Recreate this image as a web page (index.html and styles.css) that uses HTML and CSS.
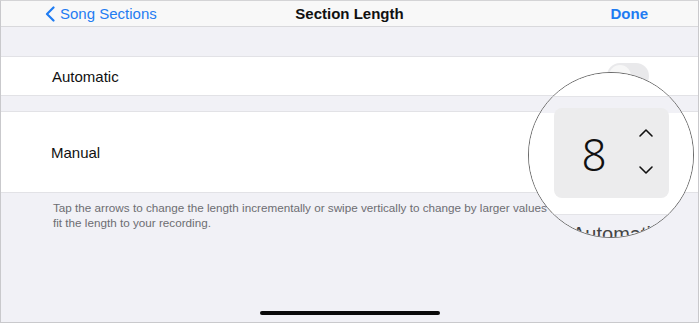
FILE: index.html
```html
<!DOCTYPE html>
<html>
<head>
<meta charset="utf-8">
<link rel="stylesheet" href="styles.css">
</head>
<body>
<div class="frame">
  <header class="nav">
    <div class="nav-back">
      <svg class="chev" width="10" height="16" viewBox="0 0 10 16"><path d="M8.5 1.5 L2 8 L8.5 14.5" fill="none" stroke="#1f7cf2" stroke-width="2.2" stroke-linecap="round" stroke-linejoin="round"/></svg>
      <span>Song Sections</span>
    </div>
    <div class="nav-title">Section Length</div>
    <div class="nav-done">Done</div>
  </header>
  <div class="band band-top"></div>
  <div class="row row-auto">
    <span class="label">Automatic</span>
    <span class="toggle"><span class="knob"></span></span>
  </div>
  <div class="band band-mid"></div>
  <div class="row row-manual">
    <span class="label">Manual</span>
  </div>
  <div class="footer">
    <p class="note">Tap the arrows to change the length incrementally or swipe vertically to change by larger values to<br>fit the length to your recording.</p>
    <div class="home"></div>
  </div>

  <div class="magnifier">
    <div class="m-white-top"></div>
    <div class="m-band"></div>
    <div class="m-white">
      <div class="stepper">
        <span class="num">8</span>
        <span class="arrows">
          <svg width="16" height="10" viewBox="0 0 16 10"><path d="M2 8 L8 2 L14 8" fill="none" stroke="#111" stroke-width="1.6" stroke-linecap="round" stroke-linejoin="round"/></svg>
          <svg width="16" height="10" viewBox="0 0 16 10"><path d="M2 2 L8 8 L14 2" fill="none" stroke="#111" stroke-width="1.6" stroke-linecap="round" stroke-linejoin="round"/></svg>
        </span>
      </div>
    </div>
    <div class="m-gray"><span class="m-text">Automatic</span></div>
  </div>
</div>
</body>
</html>
```

FILE: styles.css
```css
* { box-sizing: border-box; margin: 0; padding: 0; }
html, body { width: 700px; height: 323px; overflow: hidden; background: #fff; }
body { font-family: "Liberation Sans", Arial, sans-serif; color: #111; }

.frame {
  position: relative;
  width: 699px;
  height: 323px;
  border: 1px solid #c9c9cc;
  border-top-color: #d4d4d6;
  background: #f1f1f6;
  display: flex;
  flex-direction: column;
  overflow: hidden;
}

.nav {
  height: 26px;
  flex: none;
  background: #f8f8f8;
  border-bottom: 1px solid #d9d9dc;
  display: grid;
  grid-template-columns: 1fr auto 1fr;
  align-items: center;
  font-size: 15px;
}
.nav-back { display: flex; align-items: center; gap: 5px; padding-left: 44px; color: #1f7cf2; }
.chev { display: block; }
.nav-title { font-weight: bold; color: #111; }
.nav-done { justify-self: end; padding-right: 50px; color: #1f7cf2; font-weight: bold; }

.band { flex: none; }
.band-top { height: 30px; border-bottom: 1px solid #e2e2e6; }
.band-mid { height: 17px; border-top: 1px solid #e2e2e6; border-bottom: 1px solid #e2e2e6; }

.row {
  flex: none;
  background: #fff;
  display: flex;
  align-items: center;
  justify-content: space-between;
  font-size: 15px;
}
.row-auto { height: 38px; padding-left: 51px; padding-right: 49px; }
.row-manual { height: 81px; padding-left: 50px; border-bottom: 1px solid #e2e2e6; }

.toggle {
  width: 42px; height: 26px; border-radius: 13px;
  background: #e9e9eb; position: relative;
}
.knob {
  position: absolute; left: 2px; top: 2px; width: 22px; height: 22px;
  border-radius: 50%; background: #f7f7f7;
}

.footer { flex: 1; display: flex; flex-direction: column; }
.note {
  padding: 7px 0 0 52px;
  font-size: 11.7px;
  line-height: 15px;
  color: #6d6d72;
  white-space: nowrap;
}
.home {
  margin: auto auto 7px;
  width: 180px; height: 4px; border-radius: 2px; background: #0a0a0a;
}

.magnifier {
  position: absolute;
  left: 527px;
  top: 71px;
  width: 166px;
  height: 166px;
  border-radius: 50%;
  border: 1.2px solid #6a6a6a;
  overflow: hidden;
  background: #fff;
  display: flex;
  flex-direction: column;
}
.m-white-top { height: 23px; flex: none; background: #fff; }
.m-band { height: 17px; flex: none; background: #f1f1f6; border-top: 1px solid #e4e4e8; }
.m-white { height: 102px; flex: none; background: #fff; border-bottom: 1px solid #e4e4e8; }
.stepper {
  margin: -5px 0 0 25px;
  width: 115px; height: 90px;
  border-radius: 8px;
  background: #ececed;
  display: flex;
  align-items: center;
  position: relative;
}
.num {
  width: 80px; text-align: center;
  font-family: "Noto Sans", sans-serif;
  font-weight: 300;
  font-size: 44px;
  line-height: 1;
  color: #111;
  padding-top: 2px;
}
.arrows {
  display: flex; flex-direction: column; gap: 27px;
  margin-left: 4px;
  margin-top: -3px;
}
.arrows svg { display: block; }
.m-gray { flex: 1; background: #f1f1f6; padding: 8px 0 0 43px; }
.m-text { font-size: 20px; color: #444; }
```
